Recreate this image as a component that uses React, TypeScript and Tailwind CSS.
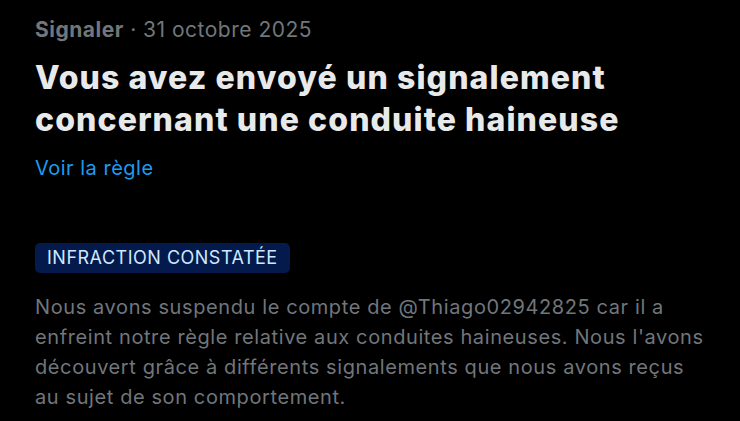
export default function App() {
  return (
    <div className="min-h-[421px] w-[740px] bg-black px-[35px] pt-[15px] font-['Inter','Noto_Sans',sans-serif]">
      <div className="text-[21px] leading-[30px] tracking-[0.5px] text-[#71767b]">
        <span className="font-bold">Signaler</span>
        <span> · 31 octobre 2025</span>
      </div>
      <h1 className="mt-[12px] text-[32px] font-extrabold leading-[42px] tracking-[1.1px] text-[#e7e9ea]">
        Vous avez envoyé un signalement
        <br />
        concernant une conduite haineuse
      </h1>
      <a className="mt-[13px] block text-[20px] leading-[28px] tracking-[0.5px] text-[#1d9bf0]">Voir la règle</a>
      <div className="mt-[61px] inline-block rounded-[5px] bg-[#041a4c] px-[12px] text-[18px] leading-[30px] tracking-[0.5px] text-[#cfe9fd]">
        INFRACTION CONSTATÉE
      </div>
      <p className="mt-[19px] text-[20px] leading-[30px] tracking-[0.6px] text-[#71767b]">
        Nous avons suspendu le compte de @Thiago02942825 car il a enfreint notre règle relative aux conduites haineuses. Nous l'avons découvert grâce à différents signalements que nous avons reçus au sujet de son comportement.
      </p>
    </div>
  )
}
